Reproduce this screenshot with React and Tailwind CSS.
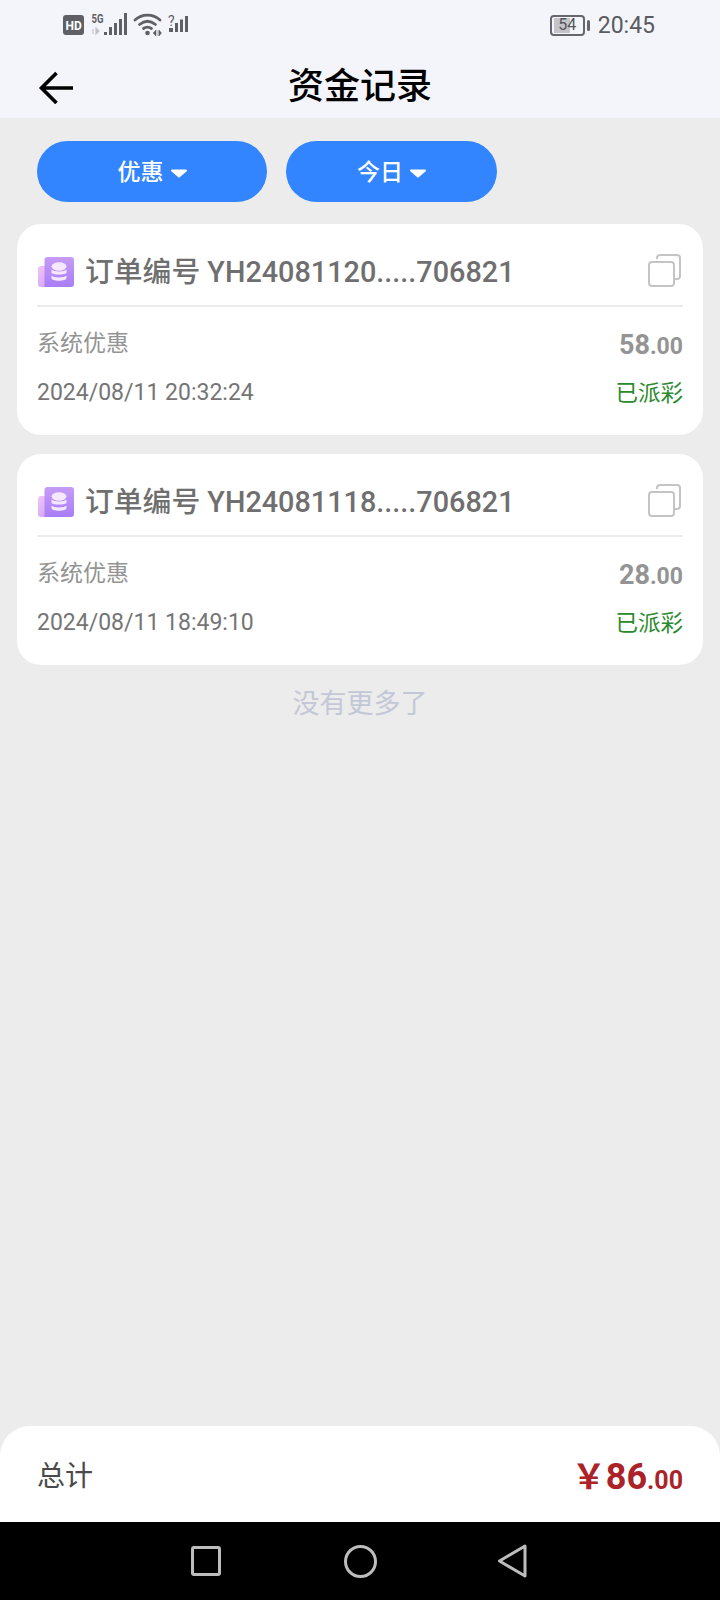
const fontStack = { fontFamily: '"Roboto", "Noto Sans CJK SC", sans-serif' };

function StatusBar() {
  return (
    <div className="flex h-[56px] items-start justify-between pl-[63px] pr-[65px] pt-[12px]">
      <svg width="130" height="26" viewBox="0 0 130 26" className="overflow-visible">
        <rect x="0" y="3" width="21" height="20" rx="3" fill="#5f5f66" />
        <text x="2.500" y="17.500" fontSize="12" fontWeight="700" fill="#fff" fontFamily="Roboto">HD</text>
        <text x="28.500" y="11" fontSize="13" fontWeight="700" fill="#5f5f66" fontFamily="Roboto" textLength="12" lengthAdjust="spacingAndGlyphs">5G</text>
        <path d="M30 17v5M33 16v6l3-3z" stroke="#c4c4c8" strokeWidth="1.200" fill="#c4c4c8" />
        <rect x="41" y="20" width="3" height="3" fill="#5f5f66" />
        <rect x="46" y="15" width="3" height="8" fill="#5f5f66" />
        <rect x="51" y="11" width="3" height="12" fill="#5f5f66" />
        <rect x="56" y="7" width="3" height="16" fill="#5f5f66" />
        <rect x="61" y="1" width="3" height="22" fill="#5f5f66" />
        <g fill="none" stroke="#5f5f66" strokeWidth="2.800" strokeLinecap="round">
          <path d="M72 8c7-6.500 18-6.500 25 0" />
          <path d="M76.500 12.500c5-4 11-4 16 0" />
          <path d="M80.500 16.500c2.500-1.800 5.500-1.800 8 0" />
        </g>
        <circle cx="84.500" cy="21" r="2.300" fill="#5f5f66" />
        <path d="M90 21l3-3v6zM95 18v6M96 18l2.500 3-2.500 3z" fill="#5f5f66" stroke="#5f5f66" strokeWidth="0.500" />
        <text x="105" y="13.500" fontSize="14" fill="#5f5f66" fontFamily="Roboto">?</text>
        <rect x="106" y="16" width="4" height="4" fill="#5f5f66" />
        <rect x="112" y="11" width="3" height="9" fill="#5f5f66" />
        <rect x="117" y="7.500" width="3" height="12.500" fill="#5f5f66" />
        <rect x="122" y="4" width="3" height="16" fill="#5f5f66" />
      </svg>
      <div className="flex items-center">
        <div className="relative flex h-[21px] w-[35px] items-center justify-center rounded-[4px] border-2 border-[#66666c] text-[16px] leading-none text-[#55555b]">
          <div className="absolute left-[2px] top-[1px] h-[15px] w-[16px] bg-[#c4c4c8]" />
          <span className="relative">54</span>
        </div>
        <div className="ml-[2px] h-[11px] w-[3px] rounded-sm bg-[#66666c]" />
        <span className="ml-[8px] pt-[2px] text-[23px] leading-[24px] text-[#5a5a60]">20:45</span>
      </div>
    </div>
  );
}

function Header() {
  return (
    <div className="relative flex h-[62px] items-center justify-center">
      <svg className="absolute left-[38px] top-[14px]" width="38" height="34" viewBox="0 0 38 34" fill="none" stroke="#000" strokeWidth="3.600">
        <path d="M3 18h32M18.500 3L3.500 18l15 15" />
      </svg>
      <h1 className="text-[36px] font-medium leading-none text-black">资金记录</h1>
    </div>
  );
}

function Pill({ label, width }) {
  return (
    <div className={`flex h-[61px] items-center justify-center gap-[7px] rounded-[31px] bg-[#3385ff] pt-[3px] text-[23px] font-medium text-white ${width}`}>
      <span>{label}</span>
      <svg width="16" height="9" viewBox="0 0 16 9"><path d="M1 0.500h14a1 1 0 0 1 .700 1.700L8.700 8.300a1 1 0 0 1-1.400 0L.3 2.200A1 1 0 0 1 1 .5z" fill="#fff" /></svg>
    </div>
  );
}

function CoinIcon({ id }) {
  return (
    <svg width="36" height="30" viewBox="0 0 36 30" className="ml-[1px] -mt-[1px] shrink-0">
      <defs>
        <linearGradient id={`${id}-back`} x1="0" y1="0" x2="1" y2="1">
          <stop offset="0" stopColor="#f0c4f5" />
          <stop offset="1" stopColor="#c89af5" />
        </linearGradient>
        <linearGradient id={`${id}-front`} x1="0" y1="0" x2="0" y2="1">
          <stop offset="0" stopColor="#c69cf6" />
          <stop offset="1" stopColor="#a97df7" />
        </linearGradient>
      </defs>
      <rect x="0" y="9" width="24" height="21" rx="3" fill={`url(#${id}-back)`} />
      <path d="M6.500 28V3a3 3 0 0 1 3-3H33a3 3 0 0 1 3 3v24a3 3 0 0 1-3 3H6.500z" fill={`url(#${id}-front)`} />
      <g fill="#f6e8ff">
        <ellipse cx="21" cy="9.500" rx="7.500" ry="4.200" />
        <path d="M13.500 12.500c1.500 2.600 13.500 2.600 15 0v3c0 2.800-15 2.800-15 0z" />
        <path d="M13.500 18.500c1.500 2.600 13.500 2.600 15 0v2.500c0 3.600-15 3.600-15 0z" />
      </g>
    </svg>
  );
}

function CopyIcon() {
  return (
    <svg width="33" height="33" viewBox="0 0 33 33" fill="none" stroke="#c4c4c4" strokeWidth="2" className="mr-[2px] -mt-[4px]">
      <path d="M9 5V4a3 3 0 0 1 3-3h17a3 3 0 0 1 3 3v18a3 3 0 0 1-3 3h-2" />
      <rect x="1" y="8" width="25" height="24" rx="3" />
    </svg>
  );
}

function RecordCard({ id, orderNo, amount, time }) {
  return (
    <div className="h-[211px] rounded-[24px] bg-white px-[20px]">
      <div className="flex h-[83px] items-center justify-between border-b-2 border-[#ececec] pt-[16px]">
        <div className="flex items-center gap-[11px]">
          <CoinIcon id={id} />
          <span className="text-[28.800px] font-medium leading-none text-[#6f6f6f]">订单编号 {orderNo}</span>
        </div>
        <CopyIcon />
      </div>
      <div className="flex items-center justify-between pt-[21px] leading-none">
        <span className="text-[23px] text-[#949494]">系统优惠</span>
        <span className="mt-[4px] font-bold text-[#949494]">
          <span className="text-[27px]">{amount}</span>
          <span className="text-[23px]">.00</span>
        </span>
      </div>
      <div className="flex items-center justify-between pt-[21px] leading-none">
        <span className="text-[23px] text-[#757575]">{time}</span>
        <span className="mt-[2px] text-[22.500px] text-[#2a8a2e]">已派彩</span>
      </div>
    </div>
  );
}

export default function App() {
  return (
    <div className="flex h-[1600px] w-[720px] flex-col overflow-hidden bg-[#ececec]" style={fontStack}>
      <div className="bg-[#f4f5fb]">
        <StatusBar />
        <Header />
      </div>

      <div className="flex gap-[19px] pl-[37px] pt-[23px]">
        <Pill label="优惠" width="w-[230px]" />
        <Pill label="今日" width="w-[211px]" />
      </div>

      <div className="flex flex-col gap-[19px] px-[17px] pt-[22px]">
        <RecordCard id="a" orderNo="YH24081120.....706821" amount="58" time="2024/08/11 20:32:24" />
        <RecordCard id="b" orderNo="YH24081118.....706821" amount="28" time="2024/08/11 18:49:10" />
      </div>

      <p className="pt-[25px] text-center text-[27px] leading-[28px] text-[#c3c7d6]">没有更多了</p>

      <div className="mt-auto flex h-[96px] items-center justify-between rounded-t-[30px] bg-white pl-[37px] pr-[37px] pt-[5px]">
        <span className="text-[28px] text-[#4a4a4a]">总计</span>
        <span className="flex items-baseline font-bold text-[#ab2229]">
          <span className="text-[34px]">￥</span>
          <span className="text-[36px]">86</span>
          <span className="text-[25px]">.00</span>
        </span>
      </div>

      <div className="flex h-[78px] items-center justify-center gap-x-[121px] bg-black pr-[2px]">
        <div className="mr-[2px] h-[30px] w-[30px] rounded-[3px] border-[3px] border-[#bdbdbd]" />
        <div className="h-[33px] w-[33px] rounded-full border-[3px] border-[#bdbdbd]" />
        <svg width="30" height="34" viewBox="0 0 30 34" fill="none" stroke="#bdbdbd" strokeWidth="3" strokeLinejoin="round">
          <path d="M27 2L1.500 17 27 32z" />
        </svg>
      </div>
    </div>
  );
}
